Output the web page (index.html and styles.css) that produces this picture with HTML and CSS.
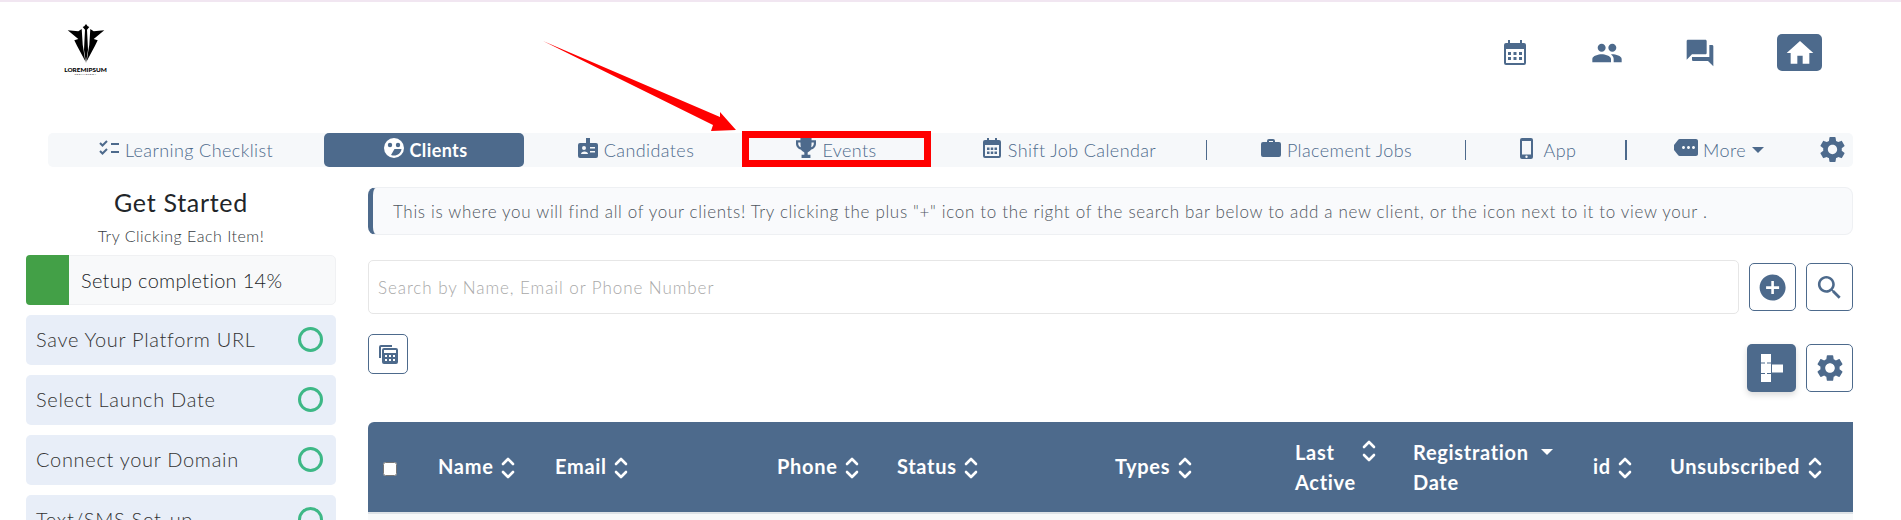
FILE: index.html
```html
<!DOCTYPE html>
<html lang="en">
<head>
    <meta charset="UTF-8">
    <title>Clients</title>
    <link rel="stylesheet" href="styles.css">
</head>
<body>
    <svg class="sprite" width="0" height="0">
        <defs>
            <symbol id="i-people" viewBox="0 0 24 24"><path d="M16 11c1.66 0 2.99-1.34 2.99-3S17.66 5 16 5c-1.66 0-3 1.34-3 3s1.34 3 3 3zm-8 0c1.66 0 2.99-1.34 2.99-3S9.66 5 8 5C6.34 5 5 6.34 5 8s1.34 3 3 3zm0 2c-2.33 0-7 1.17-7 3.5V19h14v-2.5c0-2.33-4.67-3.5-7-3.5zm8 0c-.29 0-.62.02-.97.05 1.16.84 1.97 1.97 1.97 3.45V19h6v-2.5c0-2.33-4.67-3.5-7-3.5z"/></symbol>
            <symbol id="i-forum" viewBox="0 0 24 24"><path d="M21 6h-2v9H6v2c0 .55.45 1 1 1h11l4 4V7c0-.55-.45-1-1-1zm-4 6V3c0-.55-.45-1-1-1H3c-.55 0-1 .45-1 1v14l4-4h10c.55 0 1-.45 1-1z"/></symbol>
            <symbol id="i-home" viewBox="0 0 24 24"><path d="M10 20v-6h4v6h5v-8h3L12 3 2 12h3v8z"/></symbol>
            <symbol id="i-gear" viewBox="0 0 24 24"><path d="M19.14 12.94c.04-.3.06-.61.06-.94 0-.32-.02-.64-.07-.94l2.03-1.58c.18-.14.23-.41.12-.61l-1.92-3.32c-.12-.22-.37-.29-.59-.22l-2.39.96c-.5-.38-1.03-.7-1.62-.94l-.36-2.54c-.04-.24-.24-.41-.48-.41h-3.84c-.24 0-.43.17-.47.41l-.36 2.54c-.59.24-1.13.57-1.62.94l-2.39-.96c-.22-.08-.47 0-.59.22L2.74 8.87c-.12.21-.08.47.12.61l2.03 1.58c-.05.3-.09.63-.09.94s.02.64.07.94l-2.03 1.58c-.18.14-.23.41-.12.61l1.92 3.32c.12.22.37.29.59.22l2.39-.96c.5.38 1.03.7 1.62.94l.36 2.54c.05.24.24.41.48.41h3.84c.24 0 .44-.17.47-.41l.36-2.54c.59-.24 1.13-.56 1.62-.94l2.39.96c.22.08.47 0 .59-.22l1.92-3.32c.12-.22.07-.47-.12-.61l-2.01-1.58zM12 15.6c-1.98 0-3.6-1.62-3.6-3.6s1.62-3.6 3.6-3.6 3.6 1.62 3.6 3.6-1.62 3.6-3.6 3.6z"/></symbol>
            <symbol id="i-calendar" viewBox="0 0 22 25"><path fill-rule="evenodd" d="M4 0h2v3h10V0h2v3h2a2 2 0 0 1 2 2v18a2 2 0 0 1-2 2H2a2 2 0 0 1-2-2V5a2 2 0 0 1 2-2h2zM2 9v14h18V9zm2 3h3v3H4zm5.5 0h3v3h-3zm5.500 0h3v3h-3zM4 17h3v3H4zm5.500 0h3v3h-3zm5.500 0h3v3h-3z"/></symbol>
            <symbol id="i-sort" viewBox="0 0 14 24"><path d="M2 8l5-5 5 5M2 16l5 5 5-5" fill="none" stroke="currentColor" stroke-width="2.600" stroke-linecap="round" stroke-linejoin="round"/></symbol>
        </defs>
    </svg>

    <header class="top-bar">
        <div class="logo">
            <svg class="logo-mark" viewBox="0 0 38 39">
                <path d="M19 0l1.700 2.300 1.600.7-2.300 2.700 1 20L19 39l-2-13.300 1-20L15.700 3l1.600-.7z"/>
                <path d="M.7 6.300l10.600 1 3.400-2.300 1 15.700 2.600 16.600L10 21.700l-2.700-5.400 4-1.300z"/>
                <path d="M37.300 6.300l-10.600 1L23.300 5l-1 15.700-2.600 16.600L28 21.700l2.700-5.400-4-1.300z"/>
            </svg>
            <span class="logo-name">LOREMIPSUM</span>
            <span class="logo-sub">TECHNOLOGY</span>
        </div>
        <div class="top-icons">
            <a class="top-icon"><svg class="ic-calendar"><use href="#i-calendar"/></svg></a>
            <a class="top-icon"><svg class="ic-32"><use href="#i-people"/></svg></a>
            <a class="top-icon"><svg class="ic-32"><use href="#i-forum"/></svg></a>
            <a class="home-btn"><svg class="ic-32"><use href="#i-home"/></svg></a>
        </div>
    </header>

    <nav class="tabs">
        <a class="tab">
            <svg class="tab-ic" viewBox="0 0 20 16" fill="none" stroke="currentColor" stroke-width="2">
                <path d="M1 3l2.500 2.500L8 1M1 11l2.500 2.500L8 9M12 4h8M12 12h8"/>
            </svg>
            Learning Checklist
        </a>
        <a class="tab tab-active">
            <svg class="tab-ic" viewBox="0 0 20 20">
                <circle cx="10" cy="10" r="10" fill="#fff"/>
                <circle cx="6" cy="7" r="2.200" fill="#4d6a8c"/>
                <circle cx="14" cy="7" r="2.200" fill="#4d6a8c"/>
                <path d="M2.500 11h15c-.5 4-3.500 6.500-7.500 6.500-1 0-2-.2-3-.6l3.500-5.900z" fill="#4d6a8c"/>
            </svg>
            Clients
        </a>
        <a class="tab tab-candidates">
            <svg class="tab-ic" viewBox="0 0 20 20">
                <path fill-rule="evenodd" d="M8 0h4v5h6a2 2 0 0 1 2 2v11a2 2 0 0 1-2 2H2a2 2 0 0 1-2-2V7a2 2 0 0 1 2-2h6zM4 10a2 2 0 0 0 4 0 2 2 0 0 0-4 0zm-1 6h7c0-1.500-1.500-2.500-3.500-2.500S3 14.500 3 16zm9-7v1.500h5V9zm0 4v1.500h5V13z"/>
            </svg>
            Candidates
        </a>
        <a class="tab">
            <svg class="tab-ic" viewBox="0 0 18 18">
                <path fill-rule="evenodd" d="M4 0h10v2h4v3c0 3-2 5-4.500 5.500C12.500 12 11 12.500 10.500 13v2H13v3H5v-3h2.500v-2C7 12.500 5.500 12 4.500 10.500 2 10 0 8 0 5V2h4zM2 4v1c0 1.500.8 2.800 2.300 3.400C4.100 7 4 5.500 4 4zm12 0c0 1.500-.1 3-.3 4.400C15.200 7.800 16 6.500 16 5V4z"/>
            </svg>
            Events
        </a>
        <a class="tab tab-sep">
            <svg class="tab-ic" viewBox="0 0 18 20">
                <path fill-rule="evenodd" d="M4 0h2v2h6V0h2v2h2a2 2 0 0 1 2 2v14a2 2 0 0 1-2 2H2a2 2 0 0 1-2-2V4a2 2 0 0 1 2-2h2zM2 7v11h14V7zm2 2.500h2.500V12H4zm3.750 0h2.500V12h-2.500zm3.750 0H14V12h-2.500zM4 13.500h2.500V16H4zm3.750 0h2.500V16h-2.500zm3.750 0H14V16h-2.500z"/>
            </svg>
            Shift Job Calendar
        </a>
        <a class="tab tab-sep">
            <svg class="tab-ic" viewBox="0 0 20 18">
                <path fill-rule="evenodd" d="M6 3V2a2 2 0 0 1 2-2h4a2 2 0 0 1 2 2v1h4a2 2 0 0 1 2 2v11a2 2 0 0 1-2 2H2a2 2 0 0 1-2-2V5a2 2 0 0 1 2-2zm2 0h4V2H8z"/>
            </svg>
            Placement Jobs
        </a>
        <a class="tab tab-sep-thick tab-app">
            <svg class="tab-ic ic-phone" viewBox="0 0 13 21">
                <path fill-rule="evenodd" d="M2 0h9a2 2 0 0 1 2 2v17a2 2 0 0 1-2 2H2a2 2 0 0 1-2-2V2a2 2 0 0 1 2-2zm0 3v13.500h9V3zm4.500 14.500a1.200 1.200 0 1 0 0 2.400 1.200 1.200 0 0 0 0-2.400z"/>
            </svg>
            App
        </a>
        <a class="tab tab-more">
            <svg class="tab-ic" viewBox="0 0 24 17">
                <path fill-rule="evenodd" d="M4 1c.4-.6 1-1 1.800-1H22c1.100 0 2 .9 2 2v13c0 1.100-.9 2-2 2H5.800c-.8 0-1.400-.4-1.800-1L0 11V6zM9.500 10C8.700 10 8 9.300 8 8.500S8.700 7 9.500 7s1.500.7 1.500 1.500S10.300 10 9.500 10zm5 0c-.8 0-1.500-.7-1.500-1.500S13.700 7 14.500 7s1.500.7 1.500 1.500-.7 1.500-1.500 1.500zm5 0c-.8 0-1.500-.7-1.500-1.500S18.700 7 19.500 7s1.500.7 1.500 1.500-.7 1.500-1.500 1.500z"/>
            </svg>
            More <i class="caret"></i>
        </a>
        <a class="tab-gear"><svg><use href="#i-gear"/></svg></a>
    </nav>

    <div class="content">
        <aside class="sidebar">
            <h2>Get Started</h2>
            <p>Try Clicking Each Item!</p>
            <div class="progress">
                <div class="progress-fill"></div>
                <span>Setup completion 14%</span>
            </div>
            <div class="step">Save Your Platform URL <i class="ring"></i></div>
            <div class="step">Select Launch Date <i class="ring"></i></div>
            <div class="step">Connect your Domain <i class="ring"></i></div>
            <div class="step">Text/SMS Set-up <i class="ring"></i></div>
        </aside>

        <main class="main">
            <div class="notice">This is where you will find all of your clients! Try clicking the plus "+" icon to the right of the search bar below to add a new client, or the icon next to it to view your .</div>

            <div class="search-row">
                <input class="search-input" type="text" placeholder="Search by Name, Email or Phone Number">
                <button class="btn"><svg class="ic-31"><path transform="scale(1.300)" d="M12 2C6.480 2 2 6.480 2 12s4.480 10 10 10 10-4.480 10-10S17.520 2 12 2zm5 11h-4v4h-2v-4H7v-2h4V7h2v4h4v2z"/></svg></button>
                <button class="btn"><svg class="ic-31"><path transform="scale(1.300)" d="M15.500 14h-.79l-.28-.27C15.410 12.590 16 11.110 16 9.500 16 5.910 13.090 3 9.500 3S3 5.910 3 9.500 5.910 16 9.500 16c1.610 0 3.090-.59 4.230-1.570l.27.28v.79l5 4.990L20.490 19l-4.990-5zm-6 0C7.010 14 5 11.990 5 9.500S7.010 5 9.500 5 14 7.010 14 9.500 11.990 14 9.500 14z"/></svg></button>
            </div>

            <div class="tools-row">
                <button class="btn btn-calc">
                    <svg class="ic-calc" viewBox="0 0 19 19">
                        <path fill-rule="evenodd" d="M2 0h11v2H2v11H0V2a2 2 0 0 1 2-2z"/>
                        <path fill-rule="evenodd" d="M5 3h12a2 2 0 0 1 2 2v12a2 2 0 0 1-2 2H5a2 2 0 0 1-2-2V5a2 2 0 0 1 2-2zm0 2v3h12V5zm1 5v2h2v-2zm4 0v2h2v-2zm4 0v2h2v-2zM6 14v2h2v-2zm4 0v2h2v-2zm4 0v2h2v-2z"/>
                    </svg>
                </button>
                <div class="tools-right">
                    <button class="btn btn-solid">
                        <svg class="ic-tree" viewBox="0 0 22 28">
                            <path d="M0 0h10v8.500H6v1h4V19H6v1h4v8H0v-8h4v-1H0V9.500h4v-1H0zM11 10.500h11v8H11z"/>
                        </svg>
                    </button>
                    <button class="btn"><svg class="ic-32"><use href="#i-gear"/></svg></button>
                </div>
            </div>

            <table class="grid">
                <colgroup>
                    <col class="c-check"><col class="c-name"><col class="c-email"><col class="c-phone"><col class="c-status">
                    <col class="c-types"><col class="c-last"><col class="c-reg"><col class="c-id"><col class="c-unsub">
                </colgroup>
                <thead>
                    <tr>
                        <th><input class="check" type="checkbox"></th>
                        <th>Name <svg class="sort"><use href="#i-sort"/></svg></th>
                        <th>Email <svg class="sort"><use href="#i-sort"/></svg></th>
                        <th>Phone <svg class="sort"><use href="#i-sort"/></svg></th>
                        <th>Status <svg class="sort"><use href="#i-sort"/></svg></th>
                        <th>Types <svg class="sort"><use href="#i-sort"/></svg></th>
                        <th><div class="two-line"><span>Last<br>Active</span><svg class="sort sort-top"><use href="#i-sort"/></svg></div></th>
                        <th><div class="two-line"><span>Registration<br>Date</span><i class="caret caret-white"></i></div></th>
                        <th>id <svg class="sort"><use href="#i-sort"/></svg></th>
                        <th>Unsubscribed <svg class="sort"><use href="#i-sort"/></svg></th>
                    </tr>
                </thead>
                <tbody>
                    <tr><td colspan="10"></td></tr>
                </tbody>
            </table>
        </main>
    </div>

    <!-- annotation drawn over the page -->
    <div class="event-box"></div>
    <svg class="arrow" viewBox="0 0 1901 520">
        <polygon points="543,41 720,117 720,112 736,130 711,131 713,125"/>
    </svg>
</body>
</html>
```

FILE: styles.css
```css
html, body {
    margin: 0;
    height: 520px;
    overflow: hidden;
}

body {
    font-family: Lato, "Open Sans", sans-serif;
    color: #212529;
    background: #fff;
    border-top: 2px solid #f1e6f1;
    box-sizing: border-box;
    position: relative;
}

.sprite {
    position: absolute;
}

/* top bar */
.top-bar {
    height: 131px;
    display: flex;
    justify-content: space-between;
    padding: 0 79px 0 64px;
}

.logo {
    width: 43px;
    padding-top: 22px;
    display: flex;
    flex-direction: column;
    align-items: center;
    color: #000;
}

.logo-mark {
    width: 38px;
    height: 39px;
    fill: #000;
}

.logo-name {
    font-size: 6.400px;
    font-weight: 900;
    line-height: 7px;
    margin-top: 3px;
    white-space: nowrap;
}

.logo-sub {
    font-size: 2.500px;
    line-height: 3px;
    letter-spacing: .5px;
}

.top-icons {
    display: flex;
    align-items: flex-start;
    padding-top: 32px;
    color: #4d6a8c;
    fill: #4d6a8c;
}

.top-icon {
    width: 92.500px;
    height: 37px;
    display: flex;
    align-items: center;
    justify-content: center;
}

.ic-calendar {
    width: 22px;
    height: 25px;
}

.ic-32 {
    width: 32px;
    height: 32px;
}

.ic-31 {
    width: 31px;
    height: 31px;
}

.home-btn {
    width: 45px;
    height: 37px;
    margin-left: 31px;
    background: #4d6a8c;
    border-radius: 5px;
    fill: #fff;
    display: flex;
    align-items: center;
    justify-content: center;
}

/* tabs */
.tabs {
    margin: 0 48px;
    height: 34px;
    background: #f6f8fa;
    border-radius: 5px;
    display: grid;
    grid-template-columns: 276px 200px 218px 189px 276px 259px 161px 184px 1fr;
    align-items: center;
    color: #4d6a8c;
    fill: #4d6a8c;
    font-size: 18px;
    font-weight: 300;
    letter-spacing: .4px;
}

.tab {
    height: 100%;
    display: flex;
    align-items: center;
    justify-content: center;
    gap: 6px;
    white-space: nowrap;
    position: relative;
}

.tab-ic {
    width: 20px;
    height: 20px;
    margin-top: -5px;
}

.ic-phone {
    width: 13px;
    height: 21px;
    margin: -4px 5px 0 0;
}

.tab-active {
    background: #4d6a8c;
    border-radius: 5px;
    color: #fff;
    font-weight: 700;
    padding-left: 3px;
    box-sizing: border-box;
}

.tab-candidates {
    padding-left: 6px;
}

.tab-app {
    padding-left: 3px;
    box-sizing: border-box;
}

.tab-sep::after,
.tab-sep-thick::after {
    content: "";
    position: absolute;
    right: 0;
    top: 7px;
    height: 20px;
    width: 1px;
    background: #4d6a8c;
}

.tab-sep-thick::after {
    width: 2px;
}

.tab-more .tab-ic {
    width: 24px;
    height: 17px;
    margin-right: -1px;
}

.caret {
    display: inline-block;
    width: 0;
    height: 0;
    border: 6px solid transparent;
    border-top: 6px solid currentColor;
    border-bottom: 0;
    vertical-align: 2px;
}

.tab-gear {
    height: 26px;
}

.tab-gear svg {
    width: 31px;
    height: 31px;
    margin: -3px 0 0 6px;
}

/* sidebar + main */
.content {
    display: grid;
    grid-template-columns: 310px 1485px;
    gap: 32px;
    padding: 20px 0 0 26px;
}

.sidebar h2 {
    margin: 0;
    text-align: center;
    font-size: 25px;
    font-weight: 400;
    line-height: 28px;
    letter-spacing: .7px;
    padding-top: 1px;
}

.sidebar p {
    margin: 0;
    height: 39px;
    text-align: center;
    font-size: 16px;
    font-weight: 300;
    line-height: 39px;
    letter-spacing: .5px;
    color: #343a40;
}

.progress {
    height: 50px;
    background: #f8f9fa;
    border: 1px solid #f0f1f3;
    border-radius: 5px;
    box-sizing: border-box;
    display: flex;
    align-items: center;
    font-size: 20px;
    font-weight: 300;
    letter-spacing: .3px;
    margin-bottom: 10px;
}

.progress-fill {
    width: 43px;
    height: 50px;
    margin: -1px 12px -1px -1px;
    background: #43a047;
    border-radius: 4px 0 0 4px;
}

.step {
    height: 50px;
    background: #e8eef8;
    border-radius: 5px;
    padding: 0 13px 2px 10px;
    box-sizing: border-box;
    margin-bottom: 10px;
    display: flex;
    align-items: center;
    justify-content: space-between;
    font-size: 20px;
    font-weight: 300;
    letter-spacing: .7px;
    color: #333;
}

.ring {
    width: 25px;
    height: 25px;
    border: 3px solid #3db886;
    border-radius: 50%;
    box-sizing: border-box;
}

.notice {
    height: 48px;
    box-sizing: border-box;
    padding-left: 20px;
    background: #f9fafc;
    border: 1px solid #eef0f3;
    border-left: 5px solid #4d6a8c;
    border-radius: 8px;
    display: flex;
    align-items: center;
    font-size: 17px;
    font-weight: 300;
    letter-spacing: .67px;
    color: #4f5660;
    white-space: nowrap;
}

.search-row {
    margin-top: 25px;
    height: 54px;
    display: flex;
    align-items: center;
    gap: 10px;
}

.search-input {
    flex: 1;
    height: 54px;
    box-sizing: border-box;
    padding: 0 9px;
    border: 1px solid #e6e6e6;
    border-radius: 5px;
    font-family: inherit;
    font-size: 17px;
    font-weight: 300;
    letter-spacing: .93px;
}

.search-input::placeholder {
    color: #a8a8a8;
    opacity: 1;
}

.btn {
    width: 47px;
    height: 48px;
    padding: 0;
    border: 1px solid #4d6a8c;
    border-radius: 5px;
    background: #fff;
    fill: #4d6a8c;
    display: flex;
    align-items: center;
    justify-content: center;
}

.tools-row {
    margin-top: 20px;
    height: 58px;
    display: flex;
    justify-content: space-between;
}

.btn-calc {
    width: 40px;
    height: 40px;
}

.ic-calc {
    width: 19px;
    height: 19px;
}

.tools-right {
    margin-top: 10px;
    display: flex;
    gap: 10px;
}

.btn-solid {
    width: 49px;
    background: #4d6a8c;
    border: 0;
    fill: #fff;
    box-shadow: 0 3px 6px rgba(0, 0, 0, .15);
}

.ic-tree {
    width: 22px;
    height: 28px;
}

/* table */
.grid {
    margin-top: 30px;
    width: 1485px;
    table-layout: fixed;
    border-collapse: separate;
    border-spacing: 0;
}

.c-check { width: 55px; }
.c-name { width: 117px; }
.c-email { width: 222px; }
.c-phone { width: 120px; }
.c-status { width: 218px; }
.c-types { width: 180px; }
.c-last { width: 118px; }
.c-reg { width: 180px; }
.c-id { width: 77px; }
.c-unsub { width: 198px; }

.grid th {
    height: 90px;
    padding: 0 0 0 15px;
    background: #4d6a8c;
    border-bottom: 2px solid #dee2e6;
    color: #fff;
    font-size: 20px;
    font-weight: 700;
    letter-spacing: .7px;
    text-align: left;
    white-space: nowrap;
}

.grid th:first-child {
    border-top-left-radius: 6px;
}

.grid td {
    height: 30px;
    padding: 0;
    background: #f8f9fa;
}

.check {
    width: 14px;
    height: 14px;
    margin: 0 0 2px;
    vertical-align: middle;
}

.sort {
    width: 14px;
    height: 24px;
    margin-left: 2px;
    vertical-align: middle;
    color: #fff;
}

.two-line {
    display: flex;
    align-items: flex-start;
    gap: 8px;
    line-height: 30px;
}

.two-line span {
    display: block;
}

.sort-top {
    margin: 2px 0 0 -2px;
}

.caret-white {
    margin: 12px 0 0 4px;
    border-width: 6.500px;
    border-bottom: 0;
}

/* red annotation */
.event-box {
    position: absolute;
    left: 742px;
    top: 129px;
    width: 189px;
    height: 36px;
    box-sizing: border-box;
    border: 7px solid #f00;
}

.arrow {
    position: absolute;
    left: 0;
    top: -2px;
    width: 1901px;
    height: 520px;
    fill: #f00;
    pointer-events: none;
}
```
